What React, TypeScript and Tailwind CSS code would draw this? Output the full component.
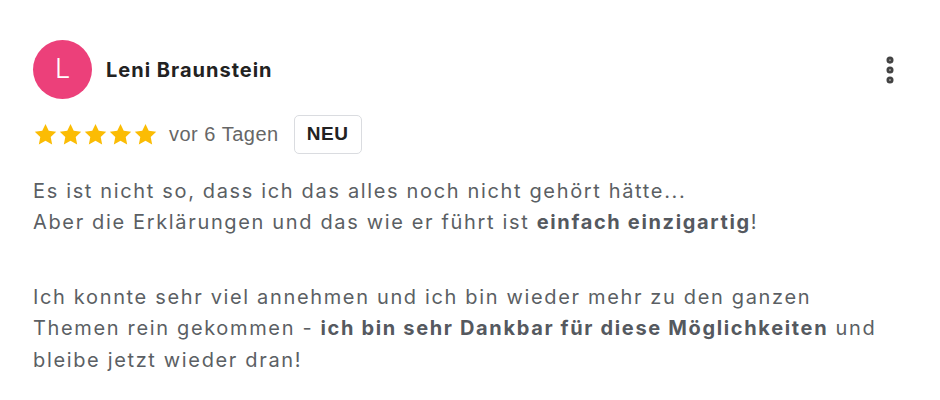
import { MoreVertical } from 'lucide-react';

function Star() {
  return (
    <svg viewBox="0 0 24 24" className="h-[25px] w-[25px]" fill="#fbbc04">
      <path d="M12 1.8l3.1 6.6 7.2.9-5.3 5 1.4 7.2L12 18l-6.4 3.5 1.4-7.2-5.3-5 7.2-.9z" />
    </svg>
  );
}

export default function App() {
  return (
    <div className="h-[400px] w-[940px] bg-white px-[33px] pt-[40px] font-['Inter',sans-serif]">
      <div className="flex items-center justify-between">
        <div className="flex items-center gap-[14px]">
          <div className="flex h-[59px] w-[59px] items-center justify-center rounded-full bg-[#ec407a] text-[27px] font-light text-white">
            L
          </div>
          <span className="text-[20px] font-bold tracking-[1px] text-[#222222]">Leni Braunstein</span>
        </div>
        <MoreVertical className="h-[34px] w-[34px] text-[#444]" strokeWidth={3} />
      </div>

      <div className="mt-[16px] flex items-center">
        <div className="flex">
          <Star />
          <Star />
          <Star />
          <Star />
          <Star />
        </div>
        <span className="ml-[11px] font-['Liberation_Sans',sans-serif] text-[20px] tracking-[0.5px] text-[#666666]">
          vor 6 Tagen
        </span>
        <span className="ml-[15px] rounded-[5px] border border-[#dadce0] px-[12px] py-[4px] font-['Liberation_Sans',sans-serif] text-[19px] font-bold tracking-[0.6px] text-[#222]">
          NEU
        </span>
      </div>

      <div className="mt-[22px] text-[20px] leading-[31.5px] tracking-[1.65px] text-[#5b5f64]">
        <p>
          Es ist nicht so, dass ich das alles noch nicht gehört hätte...
          <br />
          Aber die Erklärungen und das wie er führt ist <b className="text-[#55595f]">einfach einzigartig</b>!
        </p>
        <p className="mt-[43px]">
          Ich konnte sehr viel annehmen und ich bin wieder mehr zu den ganzen
          <br />
          Themen rein gekommen - <b className="text-[#55595f]">ich bin sehr Dankbar für diese Möglichkeiten</b> und
          <br />
          bleibe jetzt wieder dran!
        </p>
      </div>
    </div>
  );
}
